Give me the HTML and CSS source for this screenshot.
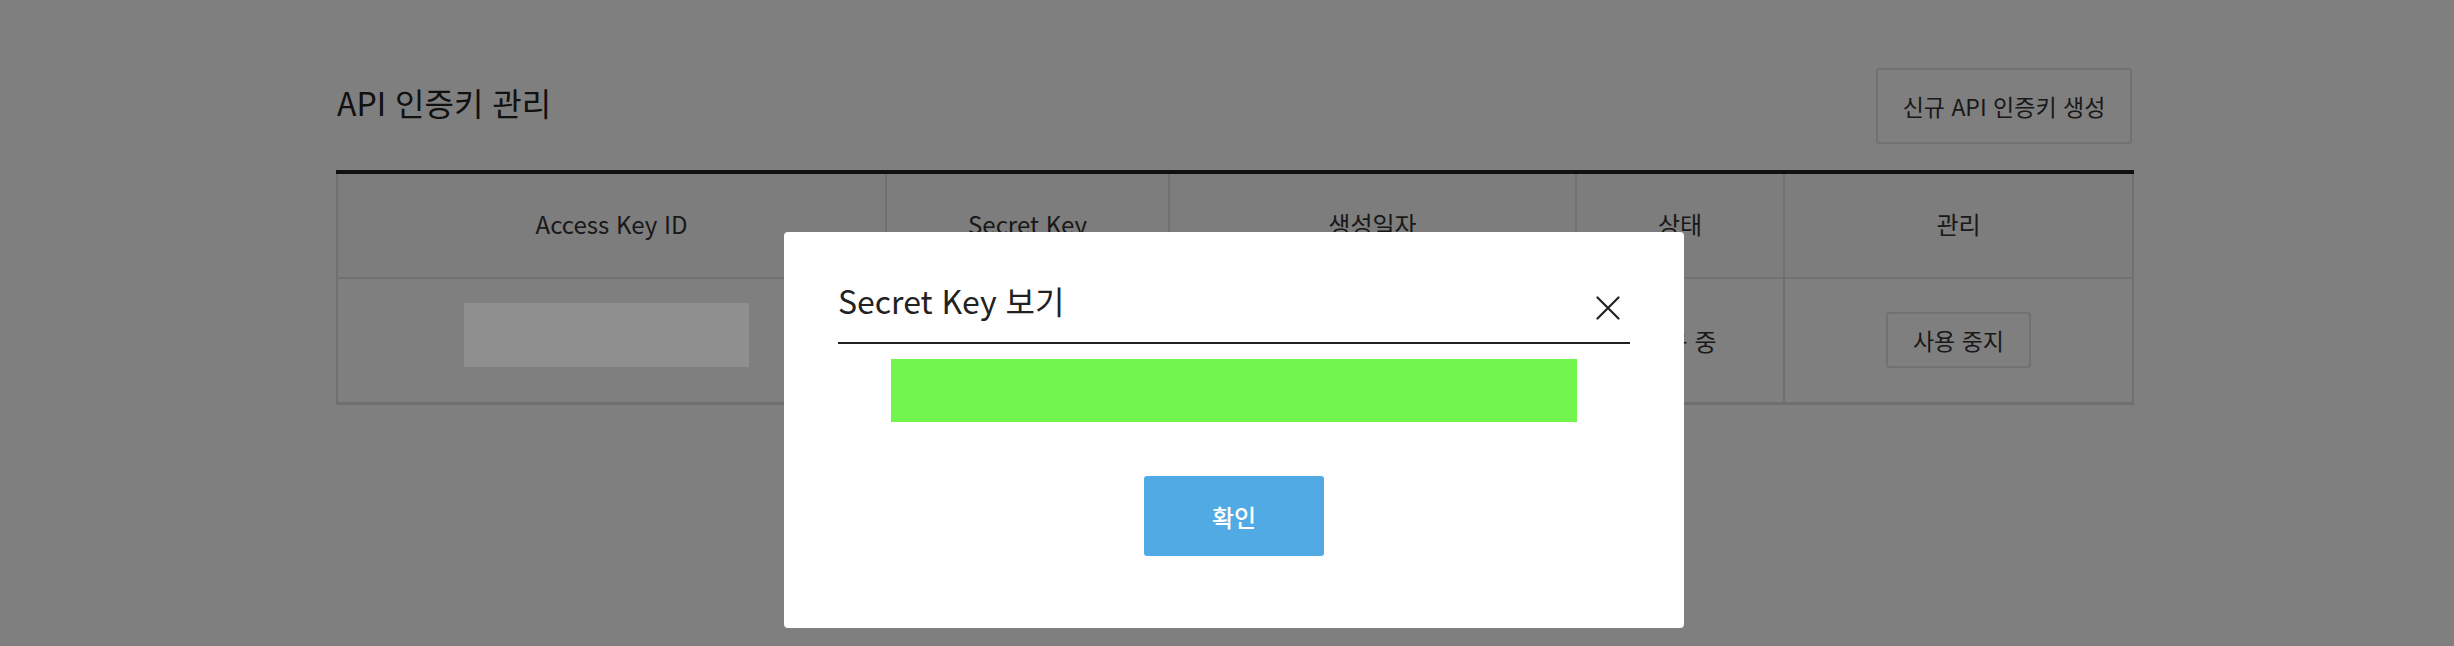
FILE: index.html
```html
<!DOCTYPE html>
<html lang="ko">

<head>
    <meta charset="UTF-8">
    <meta name="viewport" content="width=device-width, initial-scale=1.0">
    <title>API 인증키 관리</title>
    <link rel="stylesheet" href="styles.css">
</head>

<body>
    <div class="wrap">
        <div class="page-head">
            <h2 class="page-title">API 인증키 관리</h2>
            <button class="btn-line btn-new">신규 API 인증키 생성</button>
        </div>

        <table class="key-table">
            <colgroup>
                <col style="width: 549px">
                <col style="width: 283px">
                <col style="width: 407px">
                <col style="width: 208px">
                <col style="width: 349px">
            </colgroup>
            <thead>
                <tr>
                    <th>Access Key ID</th>
                    <th>Secret Key</th>
                    <th>생성일자</th>
                    <th>상태</th>
                    <th>관리</th>
                </tr>
            </thead>
            <tbody>
                <tr>
                    <!-- 키 값은 가림 처리 -->
                    <td><span class="masked"></span></td>
                    <td><button class="btn-line btn-small">보기</button></td>
                    <td>2020-06-15 14:32</td>
                    <td>사용 중</td>
                    <td><button class="btn-line btn-small">사용 중지</button></td>
                </tr>
            </tbody>
        </table>
    </div>

    <!-- Secret Key 보기 팝업 -->
    <div class="dimmed">
        <div class="modal">
            <div class="modal-head">
                <h3 class="modal-title">Secret Key 보기</h3>
                <button class="modal-close" aria-label="닫기">
                    <svg width="24" height="24" viewBox="0 0 24 24">
                        <path d="M1.5 1.5 L22.5 22.5 M22.5 1.5 L1.5 22.5" stroke="#222" stroke-width="2.2"
                            stroke-linecap="round" fill="none" />
                    </svg>
                </button>
            </div>
            <div class="secret-box"></div>
            <div class="modal-foot">
                <button class="btn-ok">확인</button>
            </div>
        </div>
    </div>
</body>

</html>
```

FILE: styles.css
```css
* {
    margin: 0;
    padding: 0;
    box-sizing: border-box;
}

body {
    font-family: "Noto Sans CJK KR", "Noto Sans", sans-serif;
    color: #333;
    background-color: #fff;
    padding-left: 14px;
}

button {
    font-family: inherit;
    cursor: pointer;
}

.wrap {
    width: 1796px;
    margin: 0 auto;
    padding-top: 68px;
}

.page-head {
    display: flex;
    justify-content: space-between;
    align-items: baseline;
    margin-bottom: 26px;
}

.page-title {
    font-size: 32px;
    font-weight: 400;
    color: #222;
    padding-left: 1px;
}

.btn-line {
    background-color: #fff;
    border: 2px solid #e2e2e2;
    border-radius: 3px;
    color: #333;
    font-size: 23px;
}

.btn-new {
    width: 256px;
    height: 76px;
}

.btn-small {
    height: 56px;
    padding: 0 25px;
}

/* 테이블 */
.key-table {
    width: 1796px;
    table-layout: fixed;
    border-collapse: collapse;
    border-top: 4px solid #222;
    border-bottom: 3px solid #dedede;
}

.key-table th,
.key-table td {
    border-left: 2px solid #e0e0e0;
    border-right: 2px solid #e0e0e0;
    text-align: center;
    vertical-align: middle;
    font-size: 24px;
    font-weight: 400;
}

.key-table th {
    height: 106px;
    padding-bottom: 4px;
    background-color: #fafafa;
    border-bottom: 2px solid #e2e2e2;
}

.key-table td {
    height: 125px;
}

.masked {
    display: inline-block;
    position: relative;
    z-index: 11;
    width: 285px;
    height: 64px;
    margin: 0 0 10px -10px;
    vertical-align: middle;
    background-color: #8f8f8f;
}

/* 팝업 */
.dimmed {
    position: fixed;
    top: 0;
    left: 0;
    right: 0;
    bottom: 0;
    z-index: 10;
    background-color: rgba(0, 0, 0, .5);
    display: flex;
    justify-content: center;
    align-items: flex-start;
    padding: 232px 0 0 14px;
}

.modal {
    width: 900px;
    height: 396px;
    background-color: #fff;
    border-radius: 4px;
    padding: 44px 54px 0;
}

.modal-head {
    display: flex;
    justify-content: space-between;
    align-items: center;
    padding-bottom: 18px;
    border-bottom: 2px solid #222;
}

.modal-title {
    font-size: 32px;
    font-weight: 400;
    line-height: 48px;
    color: #222;
}

.modal-close {
    border: none;
    background: none;
    width: 24px;
    height: 24px;
    margin: 16px 10px 0 0;
}

.modal-close svg {
    display: block;
}

.secret-box {
    width: 686px;
    height: 63px;
    margin: 15px auto 0;
    background-color: #72f54c;
}

.modal-foot {
    display: flex;
    justify-content: center;
    padding-top: 54px;
}

.btn-ok {
    width: 180px;
    height: 80px;
    border: none;
    border-radius: 3px;
    background-color: #52aae4;
    color: #fff;
    font-size: 24px;
    font-weight: 500;
}
```
